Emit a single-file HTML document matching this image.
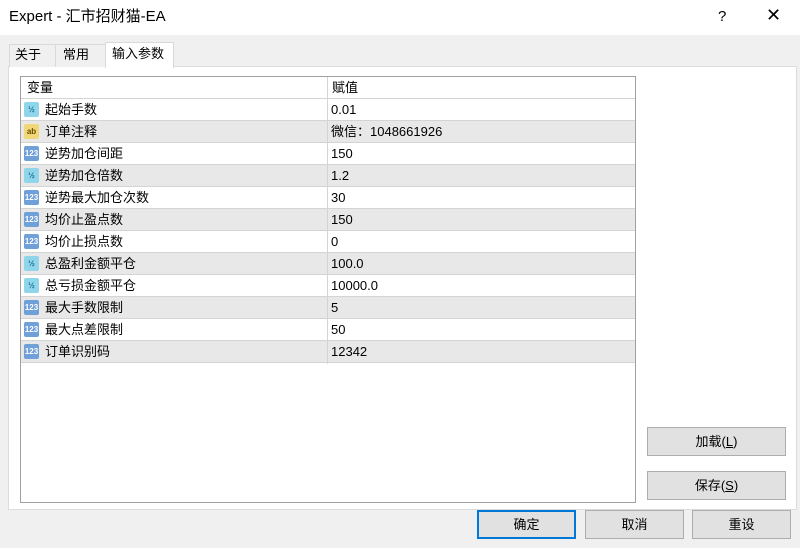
<!DOCTYPE html><html><head><meta charset="utf-8"><style>
body{margin:0;width:800px;height:548px;background:#f0f0f0;font-family:"Liberation Sans","Noto Sans CJK SC",sans-serif;font-size:13px;color:#000;position:relative;overflow:hidden}
.a{position:absolute}
.title{left:0;top:0;width:800px;height:35px;background:#fff}
.btn{position:absolute;background:#e1e1e1;border:1px solid #adadad;box-sizing:border-box;text-align:center;font-size:13px}
.ic{position:absolute;left:3px;top:3px;width:15px;height:15px;border-radius:2px;font-size:8px;line-height:15px;text-align:center;font-weight:bold}
.row{position:absolute;left:0;width:614px;height:22px;border-bottom:1px solid #d4d4d4;box-sizing:border-box}
.row span{position:absolute;top:0;line-height:21px}
.tab{position:absolute;line-height:20px}
</style></head><body>
<div class="a title"></div>
<div class="a" style="left:9px;top:6px;font-size:15px;line-height:22px">Expert - 汇市招财猫-EA</div>
<div class="a" style="left:718px;top:8px;font-size:15px">?</div>
<div class="a" style="left:766px;top:5px;font-size:18px">✕</div>
<div class="a" style="left:8px;top:66px;width:787px;height:442px;background:#fff;border:1px solid #dcdcdc"></div>
<div class="a" style="left:9px;top:44px;width:46px;height:22px;border:1px solid #d9d9d9;border-bottom:none;background:#f0f0f0"></div>
<div class="tab" style="left:15px;top:45px">关于</div>
<div class="a" style="left:55px;top:44px;width:50px;height:22px;border:1px solid #d9d9d9;border-bottom:none;background:#f0f0f0"></div>
<div class="tab" style="left:63px;top:45px">常用</div>
<div class="a" style="left:105px;top:42px;width:67px;height:25px;border:1px solid #d9d9d9;border-bottom:none;background:#fff"></div>
<div class="tab" style="left:112px;top:44px">输入参数</div>
<div class="a" style="left:20px;top:76px;width:616px;height:427px;border:1px solid #a0a0a0;box-sizing:border-box;background:#fff">
<div class="row" style="top:0"><span style="left:6px">变量</span><span style="left:311px">赋值</span></div>
</div>
<div id="rows" class="a" style="left:21px;top:99px"></div>
<div class="a" style="left:327px;top:77px;width:1px;height:287px;background:#d4d4d4"></div>
<div class="btn" style="left:647px;top:427px;width:139px;height:29px;line-height:27px">加载(<u>L</u>)</div>
<div class="btn" style="left:647px;top:471px;width:139px;height:29px;line-height:27px">保存(<u>S</u>)</div>
<div class="btn" style="left:477px;top:510px;width:99px;height:29px;line-height:25px;border:2px solid #0078d7">确定</div>
<div class="btn" style="left:585px;top:510px;width:99px;height:29px;line-height:27px">取消</div>
<div class="btn" style="left:692px;top:510px;width:99px;height:29px;line-height:27px">重设</div>
<script>
var d=[["h","起始手数","0.01"],["a","订单注释","微信：1048661926"],["n","逆势加仓间距","150"],["h","逆势加仓倍数","1.2"],["n","逆势最大加仓次数","30"],["n","均价止盈点数","150"],["n","均价止损点数","0"],["h","总盈利金额平仓","100.0"],["h","总亏损金额平仓","10000.0"],["n","最大手数限制","5"],["n","最大点差限制","50"],["n","订单识别码","12342"]];
var s="";d.forEach(function(r,i){var st={h:"background:#8fd6ea;color:#1d6f9a",a:"background:#f0d878;color:#6a4a00",n:"background:#6fa0d8;color:#fff"}[r[0]];var t={h:"½",a:"ab",n:"123"}[r[0]];
s+='<div class="row" style="top:'+(i*22)+'px;background:'+(i%2?'#e8e8e8':'#fff')+'"><div class="ic" style="'+st+'">'+t+'</div><span style="left:24px">'+r[1]+'</span><span style="left:310px">'+r[2]+'</span></div>';});
document.getElementById("rows").innerHTML=s;
</script>
</body></html>
